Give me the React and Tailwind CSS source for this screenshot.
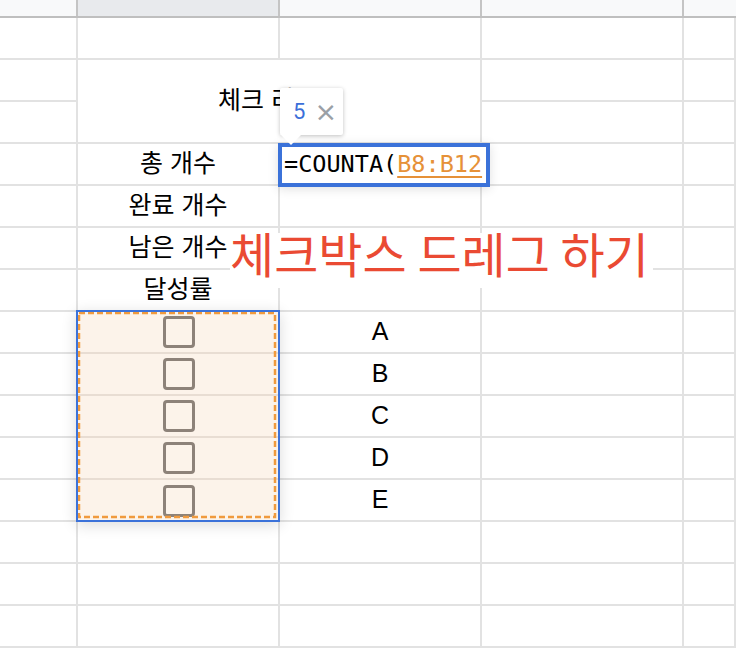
import React from "react";
import clsx from "clsx";

const cellBase =
  "h-[42px] border-r-2 border-b-2 border-[#e2e2e2] flex items-center justify-center";

const Cell = ({ children, className }) => (
  <div className={clsx(cellBase, className)}>{children}</div>
);

const EmptyRow = () => (
  <>
    <Cell />
    <Cell />
    <Cell />
    <Cell />
    <Cell />
  </>
);

const Checkbox = () => (
  <div className="w-[32px] h-[32px] border-[3px] border-[#8d8279] rounded-[4px]" />
);

const FormulaEditor = () => (
  <>
    {/* value preview tooltip */}
    <div className="absolute left-0 top-[-56px] z-20">
      <div className="w-[63px] h-[47px] bg-white rounded-[2px] shadow-[0_1px_4px_rgba(0,0,0,0.25)] flex items-center pl-[13px] gap-[9px]">
        <span className="text-[22px] text-[#3b6fd9] font-['Roboto',sans-serif]">5</span>
        <span className="text-[27px] leading-none text-[#9aa0a6] font-['DejaVu_Sans',sans-serif]">×</span>
      </div>
      <svg className="absolute left-0 top-[46px]" width="24" height="12" viewBox="0 0 24 12">
        <path d="M0 0 L11 11 L22 0 Z" fill="#ffffff" />
      </svg>
    </div>
    <div className="absolute left-[-2px] top-[-1px] w-[212px] h-[44px] z-10 bg-white border-[4px] border-[#3b72d9] shadow-[0_2px_10px_rgba(0,0,0,0.12)] flex items-center pl-[2px] font-['DejaVu_Sans_Mono',monospace] text-[23.5px] text-black whitespace-nowrap">
      =COUNTA(
      <span className="text-[#e69138] underline underline-offset-[4px] decoration-[2px]">B8:B12</span>
    </div>
  </>
);

const items = ["A", "B", "C", "D", "E"];

export default function App() {
  return (
    <div className="w-[736px] h-[648px] overflow-hidden bg-white font-['Liberation_Sans','Noto_Sans_CJK_KR',sans-serif] text-[25px] text-black">
      {/* column header strip */}
      <div className="flex h-[18px] border-b-2 border-[#bfbfbf] bg-[#f8f9fa]">
        <div className="w-[78px] border-r-2 border-[#c4c4c4]" />
        <div className="w-[202px] border-r-2 border-[#c4c4c4] bg-[#e8eaed]" />
        <div className="w-[202px] border-r-2 border-[#c4c4c4]" />
        <div className="w-[202px] border-r-2 border-[#c4c4c4]" />
        <div className="flex-1" />
      </div>

      <div className="relative grid grid-cols-[78px_202px_202px_202px_1fr]">
        <EmptyRow />

        {/* rows 3-4 merged title */}
        <Cell />
        <div className="col-span-2 row-span-2 h-[84px] border-r-2 border-b-2 border-[#e2e2e2] flex items-center justify-center">
          체크 리스트
        </div>
        <Cell />
        <Cell />
        <Cell />
        <Cell />
        <Cell />

        <Cell />
        <Cell>총 개수</Cell>
        <Cell className="relative">
          <FormulaEditor />
        </Cell>
        <Cell />
        <Cell />

        <Cell />
        <Cell>완료 개수</Cell>
        <Cell />
        <Cell />
        <Cell />

        <Cell />
        <Cell>남은 개수</Cell>
        <Cell />
        <Cell />
        <Cell />

        <Cell />
        <Cell>달성률</Cell>
        <Cell />
        <Cell />
        <Cell />

        {items.map((letter, idx) => (
          <React.Fragment key={letter}>
            <Cell />
            {idx === 0 && (
              <div className="row-span-5 relative bg-[#fcf3ea] flex flex-col">
                {items.map((el, i) => (
                  <div
                    key={el}
                    className={clsx(
                      "h-[42px] flex items-center justify-center",
                      i < 4 ? "border-b-2 border-[#e8ddd3]" : ""
                    )}
                  >
                    <Checkbox />
                  </div>
                ))}
                <div className="absolute left-[-2px] top-[-2px] right-0 bottom-0 border-2 border-[#3b72d9] shadow-[0_3px_14px_rgba(0,0,0,0.14)]">
                  <svg className="absolute inset-0 w-full h-full" preserveAspectRatio="none">
                    <rect
                      x="1"
                      y="1"
                      width="196"
                      height="204"
                      fill="none"
                      stroke="#f09a3e"
                      strokeWidth="2.5"
                      strokeDasharray="6 3"
                    />
                  </svg>
                </div>
              </div>
            )}
            <Cell>{letter}</Cell>
            <Cell />
            <Cell />
          </React.Fragment>
        ))}

        <EmptyRow />
        <EmptyRow />
        <EmptyRow />

        {/* annotation label */}
        <div className="absolute left-[230px] top-[215px] z-30 h-[55px] w-[423px] bg-white flex items-start text-[48px] leading-none text-[#ea4a33] font-['Noto_Sans_CJK_KR',sans-serif] whitespace-nowrap">
          <span className="block -mt-[5px]">체크박스 드레그 하기</span>
        </div>
      </div>
    </div>
  );
}
